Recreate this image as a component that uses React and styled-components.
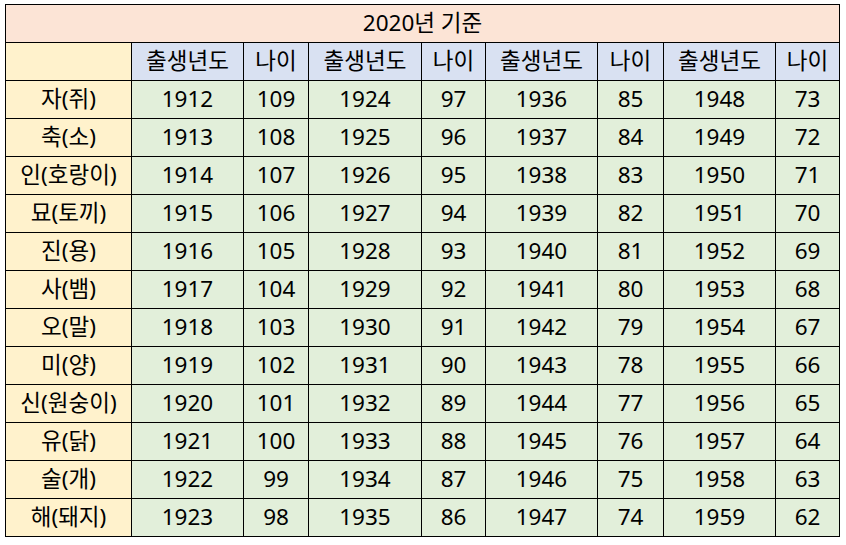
import React from 'react';
import styled, { createGlobalStyle } from 'styled-components';

const GlobalStyle = createGlobalStyle`
    html, body {
        margin: 0;
        padding: 0;
        background: #ffffff;
    }
    body {
        font-family: "Noto Sans", "Noto Sans CJK KR", sans-serif;
        color: #000000;
    }
`;

const animals = [
    '자(쥐)', '축(소)', '인(호랑이)', '묘(토끼)', '진(용)', '사(뱀)',
    '오(말)', '미(양)', '신(원숭이)', '유(닭)', '술(개)', '해(돼지)'
];

// each block: first birth year and the age for that year
const blocks = [
    { year: 1912, age: 109 },
    { year: 1924, age: 97 },
    { year: 1936, age: 85 },
    { year: 1948, age: 73 }
];

const tones = {
    title: '#fce4d6',
    label: '#fff2cc',
    head: '#d9e1f2',
    data: '#e2efda'
};

const App = () => {
    return (
        <Page>
            <GlobalStyle />
            <Sheet>
                <TitleCell>2020년 기준</TitleCell>

                <Cell $tone="label" />
                {blocks.map((b, i) => (
                    <React.Fragment key={'h' + i}>
                        <Cell $tone="head">출생년도</Cell>
                        <Cell $tone="head">나이</Cell>
                    </React.Fragment>
                ))}

                {animals.map((name, row) => (
                    <React.Fragment key={name}>
                        <Cell $tone="label">{name}</Cell>
                        {blocks.map((b, i) => (
                            <React.Fragment key={i}>
                                <Cell $tone="data">{b.year + row}</Cell>
                                <Cell $tone="data">{b.age - row}</Cell>
                            </React.Fragment>
                        ))}
                    </React.Fragment>
                ))}
            </Sheet>
        </Page>
    );
};

const Page = styled.div`
    padding: 4px 0 0 5px;
`;

const Sheet = styled.div`
    display: inline-grid;
    grid-template-columns: 125px 111px 64px 112px 63px 111px 65px 111px 63px;
    grid-auto-rows: 37px;
    gap: 1px;
    padding: 1px;
    background: #000000;
`;

const Cell = styled.div`
    display: flex;
    align-items: center;
    justify-content: center;
    padding-bottom: 1px;
    background: ${(p) => tones[p.$tone]};
    font-size: 22.5px;
    line-height: 1;
    white-space: nowrap;
`;

const TitleCell = styled(Cell)`
    grid-column: 1 / -1;
    background: ${tones.title};
`;

export default App;
